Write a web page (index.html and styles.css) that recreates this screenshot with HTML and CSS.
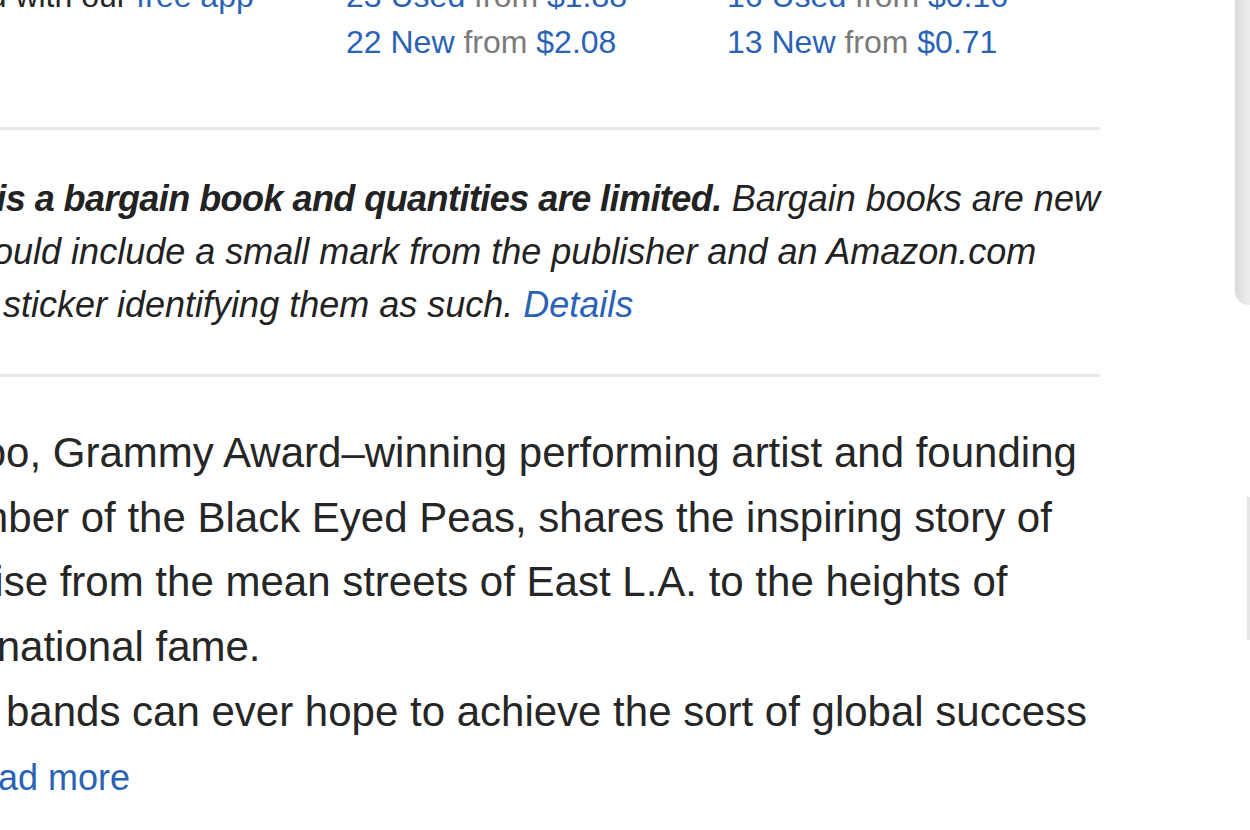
FILE: index.html
```html
<!DOCTYPE html>
<html lang="en">
<head>
<meta charset="utf-8">
<title>Book details</title>
<link rel="stylesheet" href="styles.css">
</head>
<body>
<div class="page">
  <section class="offers">
    <div class="offer-col offer-col-first">
      <div class="offer-line">Read with our <a class="link" href="#">free app</a></div>
    </div>
    <div class="offer-col">
      <div class="offer-line"><a class="link" href="#">23 Used</a> <span class="muted">from</span> <a class="link" href="#">$1.88</a></div>
      <div class="offer-line"><a class="link" href="#">22 New</a> <span class="muted">from</span> <a class="link" href="#">$2.08</a></div>
    </div>
    <div class="offer-col">
      <div class="offer-line"><a class="link" href="#">16 Used</a> <span class="muted">from</span> <a class="link" href="#">$0.16</a></div>
      <div class="offer-line"><a class="link" href="#">13 New</a> <span class="muted">from</span> <a class="link" href="#">$0.71</a></div>
    </div>
  </section>

  <hr class="rule">

  <p class="bargain"><b class="bargain-lead">This is a bargain book and quantities are limited.</b> Bargain books are new<br>but could include a small mark from the publisher and an Amazon.com<br>price sticker identifying them as such. <a class="link" href="#">Details</a></p>

  <hr class="rule">

  <div class="desc">
    <p class="desc-text">Taboo, Grammy Award–winning performing artist and founding<br>member of the Black Eyed Peas, shares the inspiring story of<br>his rise from the mean streets of East L.A. to the heights of<br>international fame.<br>Few bands can ever hope to achieve the sort of global success</p>
    <a class="read-more" href="#"><span class="caret"></span>Read more</a>
  </div>
</div>

<div class="scroll-thumb"></div>
<div class="scroll-line"></div>
</body>
</html>
```

FILE: styles.css
```css
html, body {
  margin: 0;
  padding: 0;
  background: #ffffff;
  overflow: hidden;
}

body {
  font-family: "Liberation Sans", Arial, Helvetica, sans-serif;
  color: #262626;
}

.page {
  width: 1185px;
  margin: -27px 0 0 -85px;
}

.link {
  color: #2a63b5;
  text-decoration: none;
}

.muted {
  color: #7a7a7a;
}

.offers {
  display: grid;
  grid-template-columns: 431px 381px 1fr;
  font-size: 32px;
  line-height: 46px;
  margin-bottom: 62px;
  white-space: nowrap;
}

.offer-col-first {
  padding-left: 15px;
}

.offer-line {
  height: 46px;
}

.rule {
  display: block;
  height: 3px;
  border: 0;
  margin: 0;
  background: #e8e8e8;
}

.bargain {
  font-size: 36px;
  line-height: 53px;
  font-style: italic;
  white-space: nowrap;
  margin: 42px 0 43px;
  color: #222222;
}

.bargain-lead {
  letter-spacing: -0.55px;
}

.desc {
  margin-top: 44px;
}

.desc-text {
  margin: 0;
  font-size: 42px;
  line-height: 64.7px;
  white-space: nowrap;
  color: #262626;
}

.read-more {
  display: block;
  font-size: 36px;
  line-height: 65px;
  color: #2a63b5;
  text-decoration: none;
  white-space: nowrap;
}

.caret {
  display: inline-block;
  width: 22px;
  height: 22px;
  margin-right: 15px;
}

.scroll-thumb {
  position: fixed;
  top: 0;
  right: 0;
  width: 15px;
  height: 305px;
  background: linear-gradient(to right, #dadada, #eeeeee);
  border-bottom-left-radius: 14px;
}

.scroll-line {
  position: fixed;
  top: 497px;
  right: 0;
  width: 3px;
  height: 143px;
  background: #e6e6e6;
}
```
